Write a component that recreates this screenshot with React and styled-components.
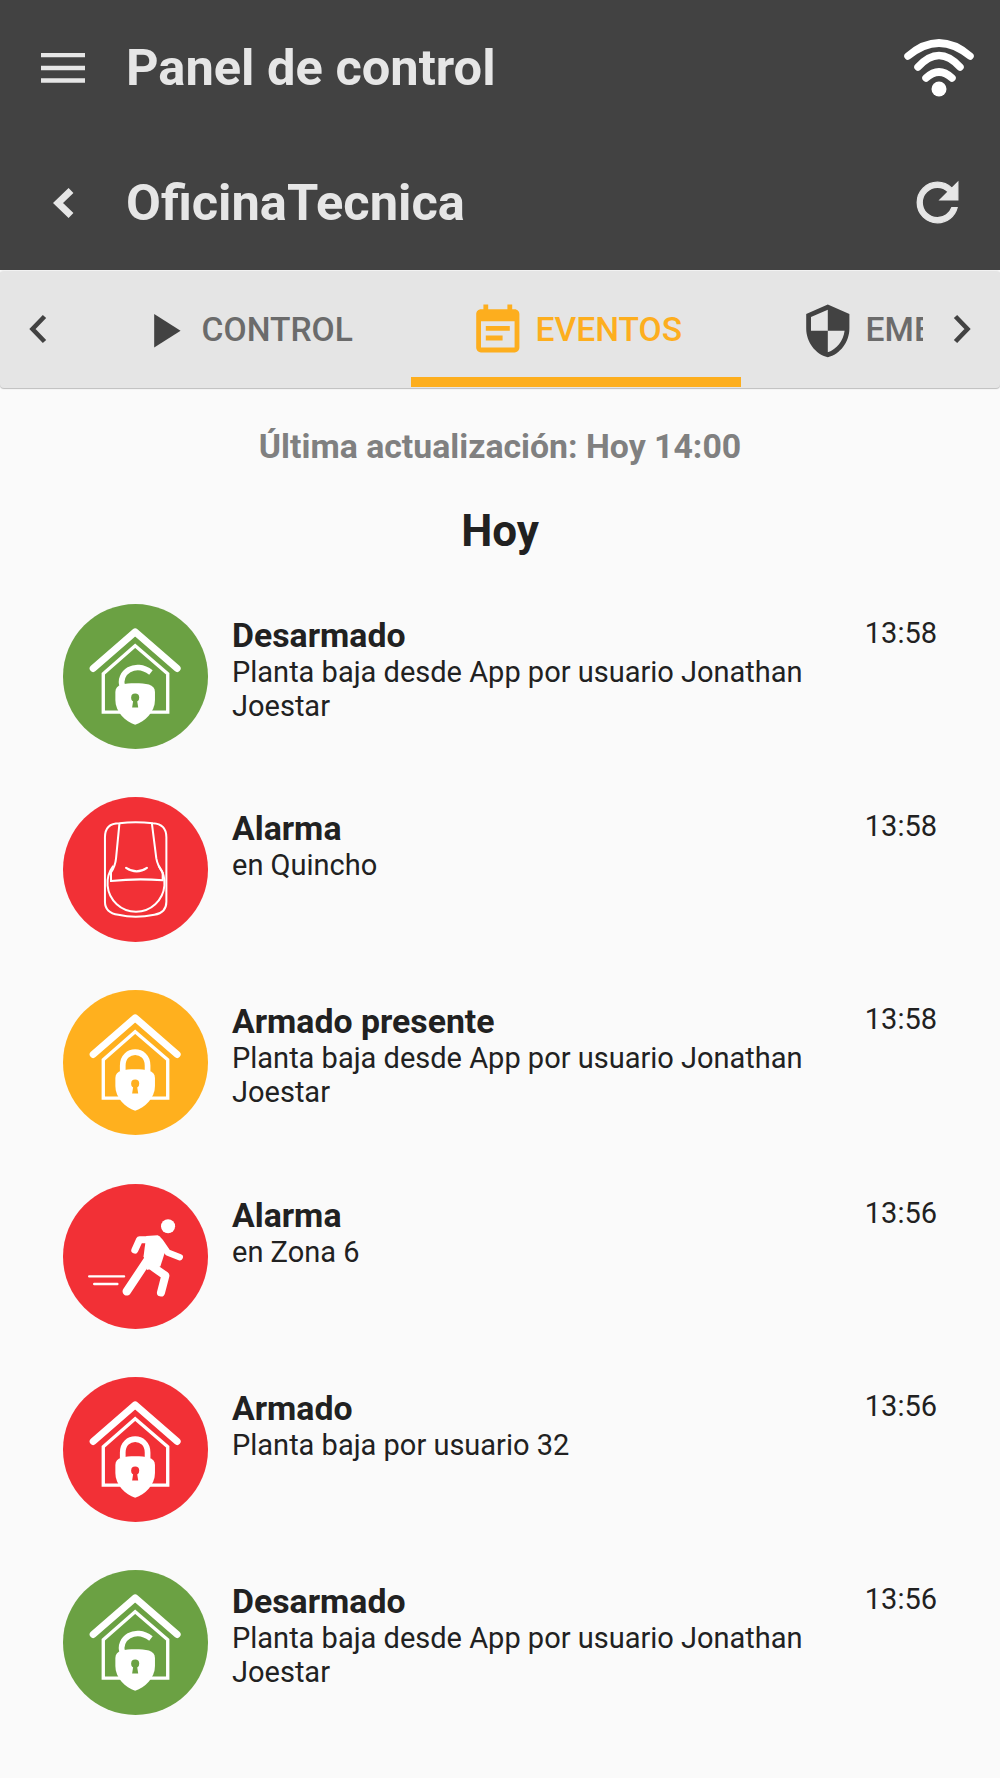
import React from "react";
import styled, { createGlobalStyle } from "styled-components";

const Global = createGlobalStyle`
  html, body { margin: 0; padding: 0; background: #fafafa; }
  body { font-family: Roboto, "Liberation Sans", sans-serif; }
  * { box-sizing: border-box; }
`;

const Page = styled.div`
  width: 1000px;
  height: 1778px;
  overflow: hidden;
  background: #fafafa;
`;
const Header = styled.header`
  background: #424242;
  height: 270px;
`;
const HeaderRow = styled.div`
  display: flex;
  align-items: center;
  height: 135px;
`;
const LeadIcon = styled.div`
  width: 126px;
  flex: none;
  display: flex;
  justify-content: center;
`;
const Title = styled.h1`
  margin: 0;
  flex: 1;
  color: #e6e6e6;
  font-size: 50.6px;
  font-weight: 700;
  line-height: 58px;
`;
const TrailIcon = styled.div`
  width: 122px;
  flex: none;
  display: flex;
  justify-content: center;
  padding-left: ${(p) => p.$left || 0}px;
  padding-right: ${(p) => p.$right || 0}px;
`;
const TabBar = styled.nav`
  display: flex;
  height: 118px;
  padding-bottom: 1px;
  background: #e5e5e5;
  border-radius: 4px;
  border-top: 1px solid #f2f2f2;
  box-shadow: 0 1px 1px #bdbdbd;
  position: relative;
`;
const ArrowCell = styled.div`
  width: ${(p) => p.$w}px;
  flex: none;
  display: flex;
  align-items: center;
  justify-content: ${(p) => (p.$side === "left" ? "flex-start" : "flex-end")};
  padding: 0 ${(p) => p.$pad}px 0;
`;
const Rail = styled.div`
  flex: 1;
  display: flex;
  overflow: hidden;
`;
const Tab = styled.div`
  width: 330px;
  flex: none;
  display: flex;
  align-items: center;
  gap: 9px;
  padding-left: ${(p) => p.$lead}px;
  padding-top: 13px;
  white-space: nowrap;
  color: ${(p) => (p.$active ? "#fdae1e" : "#6b6b6b")};
  border-bottom: 10px solid ${(p) => (p.$active ? "#fdae1e" : "transparent")};
`;
const TabLabel = styled.span`
  font-size: 33.6px;
  font-weight: 500;
  line-height: 40px;
  margin-top: -2px;
`;
const Updated = styled.p`
  margin: 0;
  padding-top: 39px;
  text-align: center;
  color: #808080;
  font-size: 33.8px;
  font-weight: 700;
  line-height: 40px;
`;
const DayTitle = styled.h2`
  margin: 0;
  padding-top: 39px;
  text-align: center;
  color: #212121;
  font-size: 44px;
  font-weight: 700;
  line-height: 50px;
`;
const List = styled.ul`
  list-style: none;
  margin: 0;
  padding: 48px 63px 0;
`;
const Row = styled.li`
  display: flex;
  height: 193.2px;
`;
const Circle = styled.div`
  width: 145px;
  height: 145px;
  flex: none;
  border-radius: 50%;
  background: ${(p) => p.$color};
`;
const Body = styled.div`
  flex: 1;
  padding: 13px 0 0 24px;
  min-width: 0;
`;
const EventTitle = styled.div`
  color: #212121;
  font-size: 33.8px;
  font-weight: 700;
  line-height: 38px;
`;
const EventText = styled.div`
  width: 590px;
  color: #212121;
  font-size: 29px;
  line-height: 34px;
`;
const Time = styled.div`
  flex: none;
  padding: 12px 0 0;
  color: #212121;
  font-size: 29px;
  line-height: 34px;
`;

const Svg = styled.svg`
  display: block;
  flex: none;
`;

const Menu = () => (
  <Svg width="44" height="30" viewBox="0 0 44 30">
    <path d="M0 2h44M0 15h44M0 27.5h44" stroke="#e6e6e6" strokeWidth="4.4" fill="none" />
  </Svg>
);
const Back = () => (
  <Svg width="21" height="32" viewBox="0 0 21 32">
    <path d="M18 3.5 5 16l13 12.5" stroke="#e6e6e6" strokeWidth="7" fill="none" />
  </Svg>
);
const Wifi = () => (
  <Svg width="80" height="65" viewBox="0 0 80 65">
    <g fill="none" stroke="#fff" strokeWidth="7.5" strokeLinecap="round">
      <path d="M8 21Q39-5 70 21" />
      <path d="M18 32Q39 9 60 32" />
      <path d="M26 43Q39 31 52 43" />
    </g>
    <circle cx="39" cy="54" r="7.5" fill="#fff" />
  </Svg>
);
const Refresh = () => (
  <Svg width="61" height="61" viewBox="0 0 24 24">
    <path
      fill="#e6e6e6"
      stroke="#e6e6e6"
      strokeWidth=".5"
      d="M17.65 6.35C16.2 4.9 14.21 4 12 4c-4.42 0-7.99 3.58-7.99 8s3.57 8 7.99 8c3.73 0 6.84-2.55 7.73-6h-2.08c-.82 2.33-3.04 4-5.65 4-3.31 0-6-2.69-6-6s2.69-6 6-6c1.66 0 3.14.69 4.22 1.78L13 11h7V4l-2.35 2.35z"
    />
  </Svg>
);
const Chevron = ({ dir }) => (
  <Svg width="18" height="30" viewBox="0 0 18 30">
    <path
      d={dir === "left" ? "M15.5 2.5 3.5 15l12 12.5" : "M2.5 2.5l12 12.5-12 12.5"}
      stroke="#424242"
      strokeWidth="4.6"
      fill="none"
    />
  </Svg>
);
const MaterialIcon = ({ d, color }) => (
  <Svg width="57.6" height="57.6" viewBox="0 0 24 24">
    <path fill={color} d={d} />
  </Svg>
);
const PLAY = "M8 5v14l11-7z";
const NOTE =
  "M17 10H7v2h10v-2zm2-7h-1V1h-2v2H8V1H6v2H5c-1.11 0-1.99.9-1.99 2L3 19c0 1.1.89 2 2 2h14c1.1 0 2-.9 2-2V5c0-1.1-.9-2-2-2zm0 16H5V8h14v11zm-5-5H7v2h7v-2z";
const SHIELD =
  "M12 1L3 5v6c0 5.55 3.84 10.74 9 12 5.16-1.26 9-6.45 9-12V5l-9-4zm0 10.99h7c-.53 4.12-3.28 7.79-7 8.94V12H5V6.3l7-3.11v8.8z";

const HouseIcon = ({ color, open }) => (
  <Svg width="145" height="145" viewBox="0 0 432 432">
    <path d="M90 192 215 83 340 192" fill="none" stroke="#fff" strokeWidth="21" strokeLinecap="round" strokeLinejoin="round" />
    <path d="M120 208 215 124 312 208V322H120Z" fill="none" stroke="#fff" strokeWidth="10" />
    {open ? (
      <path d="M177 246C163 205 215 168 262 204" fill="none" stroke="#fff" strokeWidth="17" />
    ) : (
      <path d="M178 242V225C178 172 252 172 252 225V242" fill="none" stroke="#fff" strokeWidth="17" />
    )}
    <path d="M215 236C246 236 274 238 274 262V286C274 322 244 350 215 360C186 350 156 322 156 286V262C156 238 184 236 215 236Z" fill="#fff" />
    <circle cx="215" cy="279" r="12" fill={color} />
    <path d="M210 282h10l4 26h-18z" fill={color} />
  </Svg>
);
const SensorIcon = () => (
  <Svg width="145" height="145" viewBox="0 0 432 432">
    <g fill="none" stroke="#fff" strokeWidth="6">
      <path d="M125 120Q125 78 168 78 215 72 268 78 308 80 308 120V312Q308 345 272 351 215 363 165 351 125 345 125 312Z" />
      <path d="M168 80 158 183Q156 205 143 225V250Q220 242 297 248V225Q282 205 278 183L265 80" />
      <path d="M150 205A85 85 0 1 0 285 205" />
    </g>
    <path d="M188 211Q220 232 250 211" fill="none" stroke="#fff" strokeWidth="6.5" strokeLinecap="round" />
  </Svg>
);
const RunnerIcon = () => (
  <Svg width="145" height="145" viewBox="0 0 432 432">
    <circle cx="313" cy="126" r="21" fill="#fff" />
    <g fill="none" stroke="#fff" strokeLinecap="round" strokeLinejoin="round">
      <path d="M190 320 255 222" strokeWidth="25" />
      <path d="M214 197 228 166H255" strokeWidth="21" />
      <path d="M290 172 312 204 348 218" strokeWidth="19" />
      <path d="M262 243 305 273 292 323" strokeWidth="24" />
      <path d="M78 275H182M93 298H162" strokeWidth="7" />
    </g>
    <path d="M248 155L282 153Q296 156 306 196L290 246 250 256 240 215Z" fill="#fff" />
  </Svg>
);

const GREEN = "#6ba143";
const RED = "#f23036";
const AMBER = "#ffb01e";
const LONG = "Planta baja desde App por usuario Jonathan Joestar";

const events = [
  { color: GREEN, icon: "open", title: "Desarmado", text: LONG, time: "13:58" },
  { color: RED, icon: "sensor", title: "Alarma", text: "en Quincho", time: "13:58" },
  { color: AMBER, icon: "closed", title: "Armado presente", text: LONG, time: "13:58" },
  { color: RED, icon: "runner", title: "Alarma", text: "en Zona 6", time: "13:56" },
  { color: RED, icon: "closed", title: "Armado", text: "Planta baja por usuario 32", time: "13:56" },
  { color: GREEN, icon: "open", title: "Desarmado", text: LONG, time: "13:56" },
];

const renderIcon = (e) => {
  if (e.icon === "sensor") return <SensorIcon />;
  if (e.icon === "runner") return <RunnerIcon />;
  return <HouseIcon color={e.color} open={e.icon === "open"} />;
};

export default function App() {
  return (
    <Page>
      <Global />
      <Header>
        <HeaderRow>
          <LeadIcon><Menu /></LeadIcon>
          <Title>Panel de control</Title>
          <TrailIcon $left={2}><Wifi /></TrailIcon>
        </HeaderRow>
        <HeaderRow>
          <LeadIcon><Back /></LeadIcon>
          <Title>OficinaTecnica</Title>
          <TrailIcon $right={4}><Refresh /></TrailIcon>
        </HeaderRow>
      </Header>
      <TabBar>
        <ArrowCell $w={81} $side="left" $pad={29}><Chevron dir="left" /></ArrowCell>
        <Rail>
          <Tab $lead={54}>
            <MaterialIcon d={PLAY} color="#424242" />
            <TabLabel>CONTROL</TabLabel>
          </Tab>
          <Tab $lead={58} $active>
            <MaterialIcon d={NOTE} color="#fdae1e" />
            <TabLabel>EVENTOS</TabLabel>
          </Tab>
          <Tab $lead={58}>
            <MaterialIcon d={SHIELD} color="#424242" />
            <TabLabel>EMERGENCIA</TabLabel>
          </Tab>
        </Rail>
        <ArrowCell $w={77} $side="right" $pad={29}><Chevron dir="right" /></ArrowCell>
      </TabBar>
      <Updated>Última actualización: Hoy 14:00</Updated>
      <DayTitle>Hoy</DayTitle>
      <List>
        {events.map((e, i) => (
          <Row key={i}>
            <Circle $color={e.color}>{renderIcon(e)}</Circle>
            <Body>
              <EventTitle>{e.title}</EventTitle>
              <EventText>{e.text}</EventText>
            </Body>
            <Time>{e.time}</Time>
          </Row>
        ))}
      </List>
    </Page>
  );
}
